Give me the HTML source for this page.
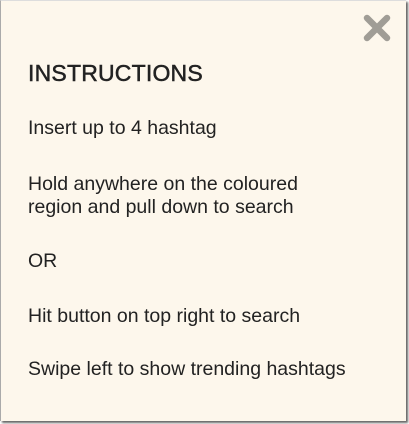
<!DOCTYPE html>
<html><head><style>
html,body{margin:0;padding:0;}
body{width:409px;height:424px;background:#fff;position:relative;overflow:hidden;font-family:"Liberation Sans",sans-serif;color:#222;}
.box{position:absolute;left:0;top:0;width:405px;height:420px;background:#fdf7ec;border-left:1px solid #aaa;border-top:1px solid #ddd;box-shadow:2px 2px 2px #666;}
.t{position:absolute;left:28px;white-space:nowrap;font-size:19.5px;}
h1{position:absolute;left:28px;top:60px;margin:0;font-size:23px;font-weight:normal;letter-spacing:0.2px;-webkit-text-stroke:0.5px #222;}
</style></head><body>
<div class="box"></div>
<svg style="position:absolute;left:361px;top:12px" width="32" height="32" viewBox="0 0 32 32"><path d="M6 6 L26 26 M26 6 L6 26" stroke="#a09d96" stroke-width="6.5" stroke-linecap="round"/></svg>
<h1>INSTRUCTIONS</h1>
<div class="t" style="top:117px">Insert up to 4 hashtag</div>
<div class="t" style="top:173px">Hold anywhere on the coloured</div>
<div class="t" style="top:196px">region and pull down to search</div>
<div class="t" style="top:250px">OR</div>
<div class="t" style="top:305px">Hit button on top right to search</div>
<div class="t" style="top:358px">Swipe left to show trending hashtags</div>
</body></html>
